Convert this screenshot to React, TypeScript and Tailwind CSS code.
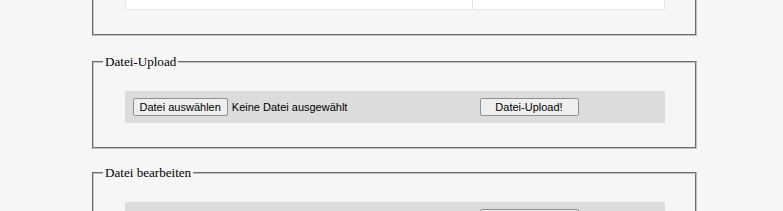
export default function App() {
  const btn =
    "h-[18px] px-[6px] text-[11px] leading-none text-black bg-[#efefef] border border-[#8f8f8f] rounded-[2px] font-['Liberation_Sans',Arial,sans-serif]";

  return (
    <div className="min-h-[211px] bg-[#f6f6f6] overflow-hidden">
      <div className="ml-[92px] w-[605px] flex flex-col">
        {/* tail of the previous section, scrolled off the top */}
        <fieldset className="border-2 border-t-0 [border-style:groove] border-[#c0c0c0] px-[9px] pb-[24px]">
          <div className="w-[540px] mx-auto h-[10px] grid grid-cols-[347px_1fr] bg-white border border-t-0 border-[#e4e4e4]">
            <div className="border-r border-[#e4e4e4]" />
            <div />
          </div>
        </fieldset>

        {/* Datei-Upload */}
        <fieldset className="mt-[18px] border-2 [border-style:groove] border-[#c0c0c0] px-[9px] pb-[24px]">
          <legend className="px-[2px] text-[13.1px] leading-[15px] text-black font-['Liberation_Serif','Times_New_Roman',serif]">
            Datei-Upload
          </legend>
          <div className="mt-[22px] w-[540px] mx-auto h-[32px] grid grid-cols-[347px_1fr] bg-[#dcdcdc]">
            <div className="flex items-center pl-[8px]">
              <button className={btn}>Datei auswählen</button>
              <span className="ml-[4px] text-[11px] text-black font-['Liberation_Sans',Arial,sans-serif]">
                Keine Datei ausgewählt
              </span>
            </div>
            <div className="flex items-center pl-[8px]">
              <button className={btn + " w-[99px]"}>Datei-Upload!</button>
            </div>
          </div>
        </fieldset>

        {/* Datei bearbeiten */}
        <fieldset className="mt-[16px] border-2 [border-style:groove] border-[#c0c0c0] px-[9px] pb-[24px]">
          <legend className="px-[2px] text-[13.1px] leading-[15px] text-black font-['Liberation_Serif','Times_New_Roman',serif]">
            Datei bearbeiten
          </legend>
          <div className="mt-[22px] w-[540px] mx-auto h-[32px] grid grid-cols-[347px_1fr] bg-[#dcdcdc]">
            <div className="flex items-center pl-[8px]" />
            <div className="flex items-center pl-[8px]">
              <button aria-label="Bearbeiten" className={btn + " w-[99px]"} />
            </div>
          </div>
        </fieldset>
      </div>
    </div>
  );
}
